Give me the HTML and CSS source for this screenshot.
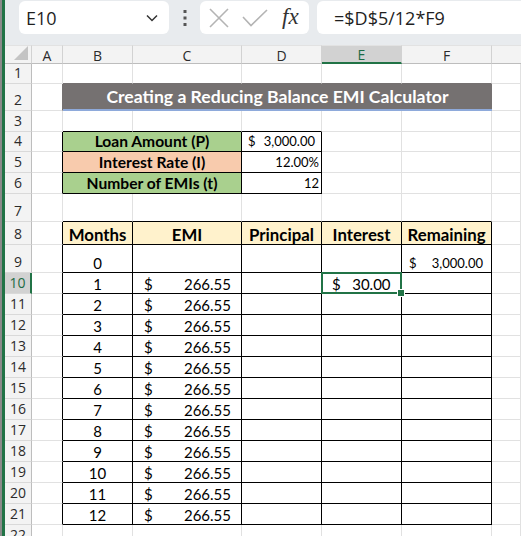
FILE: index.html
```html
<!DOCTYPE html>
<html lang="en">
<head>
<meta charset="utf-8">
<title>Reducing Balance EMI Calculator</title>
<link rel="stylesheet" href="styles.css">
</head>
<body>
<div class="app">
  <div class="toolbar">
    <div class="namebox">
      <span class="name">E10</span>
      <svg class="chev" width="12" height="8" viewBox="0 0 12 8"><polyline points="1,1.5 6,6.5 11,1.5" fill="none" stroke="#333" stroke-width="1.5"/></svg>
    </div>
    <div class="dots">
      <svg width="4" height="18" viewBox="0 0 4 18"><rect x="0.5" y="1" width="3" height="3" fill="#555"/><rect x="0.5" y="7.5" width="3" height="3" fill="#555"/><rect x="0.5" y="14" width="3" height="3" fill="#555"/></svg>
    </div>
    <div class="fxbox">
      <svg class="icon-x" width="20" height="20" viewBox="0 0 20 20"><path d="M1 1 L19 19 M19 1 L1 19" stroke="#b4b4b4" stroke-width="1.6" fill="none"/></svg>
      <svg class="icon-check" width="26" height="18" viewBox="0 0 26 18"><polyline points="1,8 9,16.5 25,1" fill="none" stroke="#b4b4b4" stroke-width="1.6"/></svg>
      <span class="fx">fx</span>
    </div>
    <div class="formula">=$D$5/12*F9</div>
  </div>

  <div class="sheet">
    <div class="ch corner"><svg width="14" height="14" viewBox="0 0 14 14"><polygon points="14,0 14,14 0,14" fill="#c4c4c4"/></svg></div>
    <div class="ch">A</div>
    <div class="ch">B</div>
    <div class="ch">C</div>
    <div class="ch">D</div>
    <div class="ch sel">E</div>
    <div class="ch">F</div>
    <div class="ch last"></div>

    <div class="rh">1</div>
    <div class="c"></div>
    <div class="c tb"></div><div class="c tb"></div><div class="c tb"></div><div class="c tb"></div><div class="c tb"></div>
    <div class="c"></div>

    <div class="rh">2</div>
    <div class="c tr"></div>
    <div class="c title">Creating a Reducing Balance EMI Calculator</div>
    <div class="c"></div>

    <div class="rh">3</div>
    <div class="c"></div>
    <div class="c bb"></div><div class="c bb"></div><div class="c bb"></div>
    <div class="c"></div><div class="c"></div><div class="c"></div>

    <div class="rh">4</div>
    <div class="c br"></div>
    <div class="c box label green">Loan Amount (P)</div>
    <div class="c box acct small"><span>$</span><span>3,000.00</span></div>
    <div class="c"></div><div class="c"></div><div class="c"></div>

    <div class="rh">5</div>
    <div class="c br"></div>
    <div class="c box label orange">Interest Rate (I)</div>
    <div class="c box num">12.00%</div>
    <div class="c"></div><div class="c"></div><div class="c"></div>

    <div class="rh">6</div>
    <div class="c br"></div>
    <div class="c box label green">Number of EMIs (t)</div>
    <div class="c box num">12</div>
    <div class="c"></div><div class="c"></div><div class="c"></div>

    <div class="rh">7</div>
    <div class="c"></div>
    <div class="c bb"></div><div class="c bb"></div><div class="c bb"></div><div class="c bb"></div><div class="c bb"></div>
    <div class="c"></div>

    <div class="rh">8</div>
    <div class="c br"></div>
    <div class="c t head">Months</div>
    <div class="c t head">EMI</div>
    <div class="c t head">Principal</div>
    <div class="c t head">Interest</div>
    <div class="c t head">Remaining</div>
    <div class="c"></div>

    <div class="rh">9</div>
    <div class="c br"></div>
    <div class="c t ctr">0</div>
    <div class="c t"></div>
    <div class="c t"></div>
    <div class="c t"></div>
    <div class="c t acct small rem"><span>$</span><span>3,000.00</span></div>
    <div class="c"></div>

    <div class="rh sel">10</div>
    <div class="c br"></div>
    <div class="c t ctr">1</div>
    <div class="c t acct emi"><span>$</span><span>266.55</span></div>
    <div class="c t"></div>
    <div class="c t active"><span class="int">$&nbsp;&nbsp;&nbsp;30.00</span></div>
    <div class="c t"></div>
    <div class="c"></div>

    <div class="rh">11</div><div class="c br"></div><div class="c t ctr">2</div><div class="c t acct emi"><span>$</span><span>266.55</span></div><div class="c t"></div><div class="c t"></div><div class="c t"></div><div class="c"></div>
    <div class="rh">12</div><div class="c br"></div><div class="c t ctr">3</div><div class="c t acct emi"><span>$</span><span>266.55</span></div><div class="c t"></div><div class="c t"></div><div class="c t"></div><div class="c"></div>
    <div class="rh">13</div><div class="c br"></div><div class="c t ctr">4</div><div class="c t acct emi"><span>$</span><span>266.55</span></div><div class="c t"></div><div class="c t"></div><div class="c t"></div><div class="c"></div>
    <div class="rh">14</div><div class="c br"></div><div class="c t ctr">5</div><div class="c t acct emi"><span>$</span><span>266.55</span></div><div class="c t"></div><div class="c t"></div><div class="c t"></div><div class="c"></div>
    <div class="rh">15</div><div class="c br"></div><div class="c t ctr">6</div><div class="c t acct emi"><span>$</span><span>266.55</span></div><div class="c t"></div><div class="c t"></div><div class="c t"></div><div class="c"></div>
    <div class="rh">16</div><div class="c br"></div><div class="c t ctr">7</div><div class="c t acct emi"><span>$</span><span>266.55</span></div><div class="c t"></div><div class="c t"></div><div class="c t"></div><div class="c"></div>
    <div class="rh">17</div><div class="c br"></div><div class="c t ctr">8</div><div class="c t acct emi"><span>$</span><span>266.55</span></div><div class="c t"></div><div class="c t"></div><div class="c t"></div><div class="c"></div>
    <div class="rh">18</div><div class="c br"></div><div class="c t ctr">9</div><div class="c t acct emi"><span>$</span><span>266.55</span></div><div class="c t"></div><div class="c t"></div><div class="c t"></div><div class="c"></div>
    <div class="rh">19</div><div class="c br"></div><div class="c t ctr">10</div><div class="c t acct emi"><span>$</span><span>266.55</span></div><div class="c t"></div><div class="c t"></div><div class="c t"></div><div class="c"></div>
    <div class="rh">20</div><div class="c br"></div><div class="c t ctr">11</div><div class="c t acct emi"><span>$</span><span>266.55</span></div><div class="c t"></div><div class="c t"></div><div class="c t"></div><div class="c"></div>
    <div class="rh">21</div><div class="c br"></div><div class="c t ctr">12</div><div class="c t acct emi"><span>$</span><span>266.55</span></div><div class="c t"></div><div class="c t"></div><div class="c t"></div><div class="c"></div>

    <div class="rh">22</div><div class="c"></div><div class="c"></div><div class="c"></div><div class="c"></div><div class="c"></div><div class="c"></div><div class="c"></div>
  </div>
</div>
</body>
</html>
```

FILE: styles.css
```css
html, body {
  margin: 0;
  padding: 0;
  width: 521px;
  height: 536px;
  overflow: hidden;
  background: #ffffff;
}

body {
  border-left: 2px solid #8a8a8a;
  box-sizing: border-box;
}

.app {
  border-left: 3px solid #217346;
  height: 536px;
  overflow: hidden;
}

.toolbar {
  height: 45px;
  box-sizing: border-box;
  background: #e8ebee;
  display: flex;
  align-items: flex-start;
  padding: 1px 0 0 14px;
  overflow: hidden;
  font-family: "Open Sans", "Noto Sans", sans-serif;
}

.namebox {
  width: 150px;
  height: 33px;
  flex-shrink: 0;
  box-sizing: border-box;
  background: #ffffff;
  border-radius: 6px;
  display: flex;
  align-items: center;
  padding: 0 11px 0 7px;
}

.name {
  font-size: 18px;
  color: #1f1f1f;
  line-height: 1;
}

.chev {
  margin-left: auto;
}

.dots {
  width: 31px;
  height: 33px;
  flex-shrink: 0;
  display: flex;
  align-items: center;
  justify-content: center;
}

.fxbox {
  width: 109px;
  height: 33px;
  flex-shrink: 0;
  box-sizing: border-box;
  background: #ffffff;
  border-radius: 6px;
  display: flex;
  align-items: center;
  padding-left: 9px;
}

.icon-check {
  margin-left: 13px;
}

.fx {
  margin-left: 14px;
  font-family: "Liberation Serif", "DejaVu Serif", serif;
  font-style: italic;
  font-size: 23px;
  color: #333333;
  line-height: 1;
  margin-top: -2px;
}

.formula {
  flex: 1;
  margin-left: 8px;
  margin-right: -12px;
  height: 33px;
  background: #ffffff;
  border-radius: 6px;
  display: flex;
  align-items: center;
  padding-left: 17px;
  font-size: 18px;
  color: #1f1f1f;
}

.sheet {
  display: grid;
  grid-template-columns: 27px 31px 70px 109px 80px 80px 90px 1fr;
  grid-template-rows: 19px 20px 27px 21px 20px 21px 21px 28px 23px 28px repeat(12, 21px) 1fr;
  height: 491px;
  font-family: Lato, "Liberation Sans", sans-serif;
  font-size: 15px;
  color: #000000;
}

.ch, .rh {
  background: #f3f3f3;
  font-family: "Open Sans", "Noto Sans", sans-serif;
  font-size: 14px;
  color: #2b2b2b;
  display: flex;
  align-items: center;
  justify-content: center;
  box-sizing: border-box;
}

.ch {
  border-right: 1px solid #d2d2d2;
  border-bottom: 1px solid #bdbdbd;
  border-top: 1px solid #e2e2e2;
  padding-top: 1px;
}

.ch.last {
  border-right: none;
}

.ch.corner {
  align-items: flex-end;
  justify-content: flex-end;
  padding: 0 3px 3px 0;
}

.ch.sel {
  background: #d2d2d2;
  color: #1d6b45;
  border-bottom: 2px solid #217346;
}

.rh {
  border-right: 1px solid #bdbdbd;
  border-bottom: 1px solid #d9d9d9;
  align-items: flex-end;
  line-height: 20px;
}

.rh.sel {
  background: #d2d2d2;
  color: #1d6b45;
  border-right: 2px solid #217346;
}

.c {
  box-sizing: border-box;
  border-right: 1px solid #e1e1e1;
  border-bottom: 1px solid #e1e1e1;
  display: flex;
  align-items: flex-end;
  line-height: 18px;
  white-space: nowrap;
  min-width: 0;
}

.c.bb { border-bottom-color: #000000; }
.c.br { border-right-color: #000000; }
.c.tb { border-bottom-color: #757171; }
.c.tr { border-right-color: #757171; }

.title {
  grid-column: span 5;
  background: #757171;
  color: #ffffff;
  font-weight: 700;
  font-size: 17.6px;
  justify-content: center;
  border-right: none;
  border-bottom: 2px solid #8eaadb;
  line-height: 22px;
  padding-bottom: 1px;
}

.box {
  border-right-color: #000000;
  border-bottom-color: #000000;
  padding-bottom: 1px;
}

.label {
  grid-column: span 2;
  font-weight: 700;
  font-size: 15.6px;
  justify-content: center;
}

.green { background: #a9d08e; }
.orange { background: #f8cbad; }

.num {
  justify-content: flex-end;
  padding-right: 2px;
  font-size: 13px;
}

.acct {
  justify-content: space-between;
}

.small {
  font-size: 13px;
  padding-left: 6px;
  padding-right: 6px;
}

.rem {
  padding-left: 7px;
  padding-right: 8px;
}

.emi {
  padding-left: 11px;
  padding-right: 10px;
}

.t {
  border-right-color: #000000;
  border-bottom-color: #000000;
}

.head {
  background: #fff2cc;
  font-weight: 700;
  justify-content: center;
  font-size: 16.8px;
}

.ctr {
  justify-content: center;
}

.active {
  position: relative;
  justify-content: flex-start;
  padding-left: 10px;
}

.active::after {
  content: "";
  position: absolute;
  left: -1px;
  top: -1px;
  right: -1px;
  bottom: -1px;
  border: 2px solid #217346;
}

.active::before {
  content: "";
  position: absolute;
  right: -4px;
  bottom: -4px;
  width: 6px;
  height: 6px;
  background: #217346;
  border: 1px solid #ffffff;
  z-index: 2;
}
```
